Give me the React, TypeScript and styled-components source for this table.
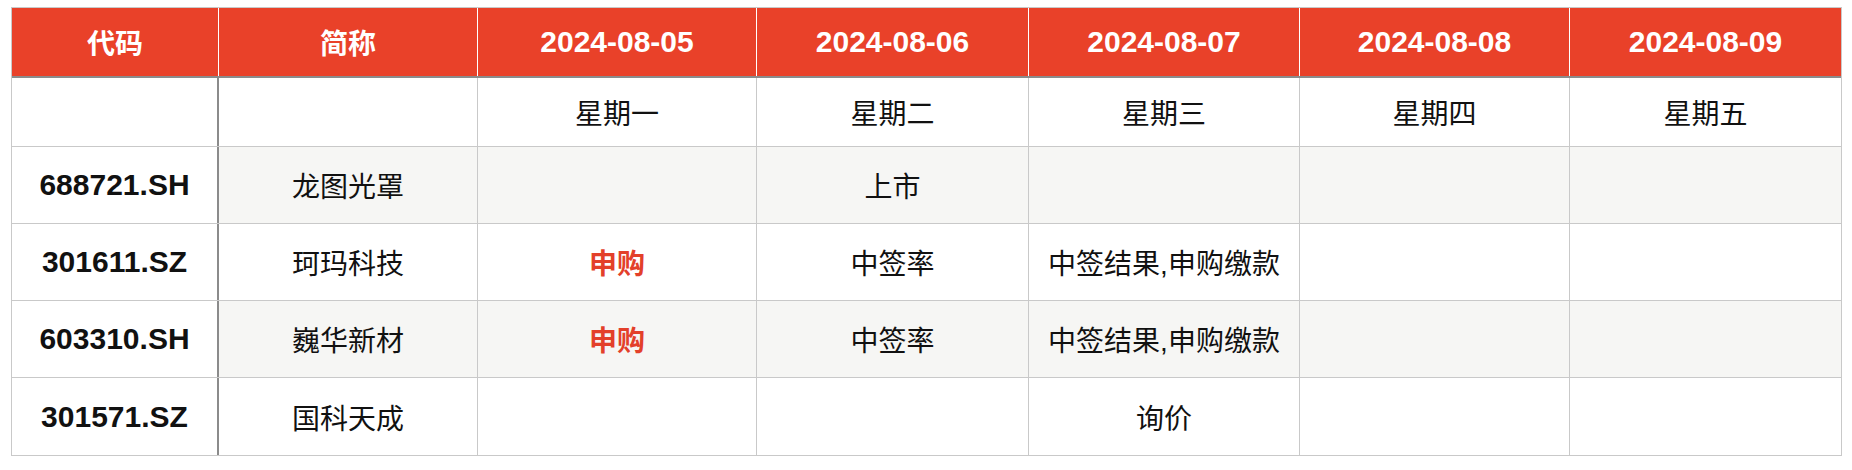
import styled, { createGlobalStyle } from "styled-components";

const GlobalStyle = createGlobalStyle`
  html, body {
    margin: 0;
    padding: 0;
    background: #ffffff;
  }
  body {
    font-family: "Liberation Sans", Arial, "Noto Sans CJK SC", sans-serif;
  }
`;

type Row = {
  code: string;
  name: string;
  days: string[];
};

const dates = ["2024-08-05", "2024-08-06", "2024-08-07", "2024-08-08", "2024-08-09"];
const weekdays = ["星期一", "星期二", "星期三", "星期四", "星期五"];

const rows: Row[] = [
  { code: "688721.SH", name: "龙图光罩", days: ["", "上市", "", "", ""] },
  { code: "301611.SZ", name: "珂玛科技", days: ["申购", "中签率", "中签结果,申购缴款", "", ""] },
  { code: "603310.SH", name: "巍华新材", days: ["申购", "中签率", "中签结果,申购缴款", "", ""] },
  { code: "301571.SZ", name: "国科天成", days: ["", "", "询价", "", ""] },
];

const COLS = "207px 259px 279px 272px 271px 270px 271px";

const Page = styled.div`
  padding: 7px 0 0 11px;
`;

const Table = styled.div`
  width: 1829px;
  border: 1px solid #c9c9c9;
  display: flex;
  flex-direction: column;
`;

const HeadRow = styled.div`
  display: grid;
  grid-template-columns: ${COLS};
  height: 70px;
  background: #e94129;
  border-bottom: 2px solid #8b8b8b;
  box-sizing: border-box;
`;

const HeadCell = styled.div<{ $latin?: boolean }>`
  display: flex;
  align-items: center;
  justify-content: center;
  color: #ffffff;
  font-weight: 700;
  font-size: ${({ $latin }) => ($latin ? 30 : 28)}px;
  font-family: "Liberation Sans", Arial, "Noto Sans CJK SC", sans-serif;
  border-right: 1px solid #ffffff;
  &:last-child {
    border-right: none;
  }
`;

const BodyRow = styled.div<{ $shaded?: boolean; $h: number }>`
  display: grid;
  grid-template-columns: ${COLS};
  height: ${({ $h }) => $h}px;
  background: ${({ $shaded }) => ($shaded ? "#f6f6f4" : "#ffffff")};
  border-bottom: 1px solid #c9c9c9;
  box-sizing: border-box;
  &:last-child {
    border-bottom: none;
  }
`;

const Cell = styled.div<{ $tone?: "code" | "hot" }>`
  display: flex;
  align-items: center;
  justify-content: center;
  font-size: ${({ $tone }) => ($tone === "code" ? 30 : 28)}px;
  font-family: "Liberation Sans", Arial, "Noto Sans CJK SC", sans-serif;
  color: ${({ $tone }) => ($tone === "hot" ? "#e3402a" : "#111111")};
  font-weight: ${({ $tone }) => ($tone ? 700 : 400)};
  border-right: 1px solid #c9c9c9;
  white-space: nowrap;
  &:last-child {
    border-right: none;
  }
`;

const CodeCell = styled(Cell)`
  background: #ffffff;
  border-right: 2px solid #8b8b8b;
`;

export default function App() {
  return (
    <Page>
      <GlobalStyle />
      <Table>
        <HeadRow>
          <HeadCell>代码</HeadCell>
          <HeadCell>简称</HeadCell>
          {dates.map((d) => (
            <HeadCell key={d} $latin>
              {d}
            </HeadCell>
          ))}
        </HeadRow>
        <BodyRow $h={69}>
          <CodeCell />
          <Cell />
          {weekdays.map((w) => (
            <Cell key={w}>{w}</Cell>
          ))}
        </BodyRow>
        {rows.map((r, i) => (
          <BodyRow key={r.code} $shaded={i % 2 === 0} $h={77}>
            <CodeCell $tone="code">{r.code}</CodeCell>
            <Cell>{r.name}</Cell>
            {r.days.map((d, j) => (
              <Cell key={j} $tone={d === "申购" ? "hot" : undefined}>
                {d}
              </Cell>
            ))}
          </BodyRow>
        ))}
      </Table>
    </Page>
  );
}
